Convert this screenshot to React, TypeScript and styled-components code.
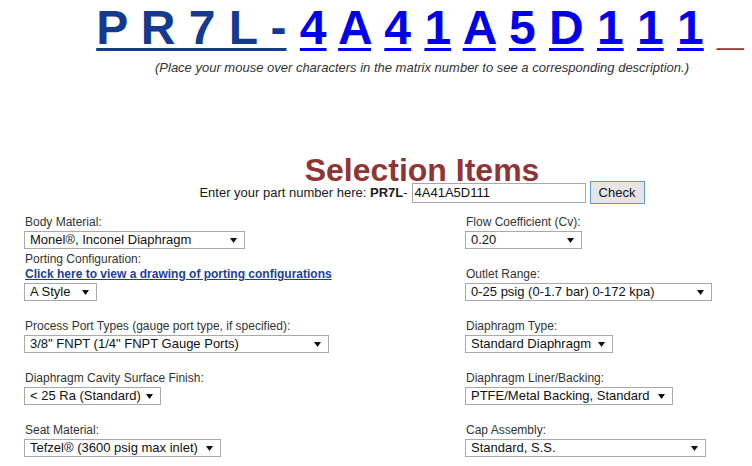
import React from "react";
import styled, { createGlobalStyle } from "styled-components";

const GlobalStyle = createGlobalStyle`
  html, body {
    margin: 0;
    padding: 0;
    background: #ffffff;
    overflow: hidden;
  }
  body {
    font-family: "Liberation Sans", Arial, Helvetica, sans-serif;
    color: #222222;
  }
`;

const Page = styled.div`
  width: 752px;
  height: 466px;
  overflow: hidden;
`;

const Header = styled.header`
  padding-left: 88px;
  text-align: center;
`;

const MatrixTitle = styled.div`
  font-size: 48px;
  font-weight: bold;
  line-height: 56px;
  white-space: nowrap;
`;

const Prefix = styled.span`
  color: #143a90;
  text-decoration: underline;
  text-decoration-thickness: 3px;
  text-underline-offset: 4px;
`;

const MatrixChar = styled.a`
  color: #0000ee;
  text-decoration: underline;
  text-decoration-thickness: 3px;
  text-underline-offset: 4px;
  cursor: pointer;
`;

const Tail = styled.span`
  color: #8f3a34;
`;

const Hint = styled.div`
  margin-top: 4px;
  margin-left: 4px;
  font-size: 13px;
  line-height: 16px;
  font-style: italic;
  color: #333333;
`;

const Heading = styled.h1`
  margin: 83px 0 0 4px;
  font-size: 32px;
  line-height: 22px;
  font-weight: bold;
  color: #8f3535;
`;

const PartRow = styled.div`
  display: flex;
  justify-content: center;
  align-items: center;
  height: 23px;
  margin-left: 4px;
  font-size: 13px;
  color: #1a1a1a;
  white-space: pre;
`;

const Bold = styled.b`
  font-weight: bold;
`;

const PartInput = styled.div`
  box-sizing: border-box;
  width: 174px;
  height: 20px;
  margin-left: 4px;
  padding: 0 2px;
  border: 1px solid #a9a9a9;
  font-size: 13px;
  line-height: 18px;
  text-align: left;
  color: #111111;
`;

const CheckButton = styled.button`
  box-sizing: border-box;
  width: 55px;
  height: 23px;
  margin-left: 4px;
  padding: 0;
  border: 1px solid #5d9ad8;
  background: #e5e5e5;
  font-family: "Liberation Sans", Arial, sans-serif;
  font-size: 13px;
  color: #111111;
`;

const Form = styled.div`
  display: grid;
  grid-template-columns: 441px 1fr;
  grid-auto-rows: 52px;
  margin-top: 10px;
  padding-left: 24px;
`;

const Cell = styled.div`
  display: flex;
  flex-direction: column;
  align-items: flex-start;
`;

const Label = styled.div`
  font-size: 12px;
  line-height: 14px;
  color: #333333;
  margin: 1px 0 2px 1px;
`;

const TopLabel = styled(Label)`
  margin-top: 3px;
  margin-bottom: 0;
`;

const Link = styled.a`
  font-size: 12px;
  line-height: 14px;
  font-weight: bold;
  color: #1d3f93;
  text-decoration: underline;
  margin: 1px 0 2px 1px;
  cursor: pointer;
`;

const SelectBox = styled.div<{ $w: number }>`
  box-sizing: border-box;
  position: relative;
  width: ${(p) => p.$w}px;
  height: 18px;
  padding-left: 5px;
  border: 1px solid #a9a9a9;
  background: #ffffff;
  font-size: 13px;
  line-height: 16px;
  color: #111111;
  white-space: nowrap;
`;

const Arrow = styled.svg`
  position: absolute;
  right: 7px;
  top: 6px;
`;

function Select({ w, value }: { w: number; value: string }) {
  return (
    <SelectBox $w={w}>
      {value}
      <Arrow width="7" height="5" viewBox="0 0 7 5">
        <polygon points="0,0 7,0 3.5,5" fill="#111" />
      </Arrow>
    </SelectBox>
  );
}

const matrix = ["4", "A", "4", "1", "A", "5", "D", "1", "1", "1"];

export default function App() {
  return (
    <Page>
      <GlobalStyle />
      <Header>
        <MatrixTitle>
          <Prefix>P R 7 L -</Prefix>{" "}
          {matrix.map((c, i) => (
            <React.Fragment key={i}>
              <MatrixChar>{c}</MatrixChar>{" "}
            </React.Fragment>
          ))}
          <Tail>_</Tail>
        </MatrixTitle>
        <Hint>
          (Place your mouse over characters in the matrix number to see a corresponding description.)
        </Hint>
        <Heading>Selection Items</Heading>
        <PartRow>
          Enter your part number here: <Bold>PR7L</Bold>-
          <PartInput>4A41A5D111</PartInput>
          <CheckButton>Check</CheckButton>
        </PartRow>
      </Header>
      <Form>
        <Cell>
          <Label>Body Material:</Label>
          <Select w={221} value="Monel®, Inconel Diaphragm" />
          <TopLabel>Porting Configuration:</TopLabel>
        </Cell>
        <Cell>
          <Label>Flow Coefficient (Cv):</Label>
          <Select w={117} value="0.20" />
        </Cell>
        <Cell>
          <Link>Click here to view a drawing of porting configurations</Link>
          <Select w={73} value="A Style" />
        </Cell>
        <Cell>
          <Label>Outlet Range:</Label>
          <Select w={247} value="0-25 psig (0-1.7 bar) 0-172 kpa)" />
        </Cell>
        <Cell>
          <Label>Process Port Types (gauge port type, if specified):</Label>
          <Select w={305} value={'3/8" FNPT (1/4" FNPT Gauge Ports)'} />
        </Cell>
        <Cell>
          <Label>Diaphragm Type:</Label>
          <Select w={148} value="Standard Diaphragm" />
        </Cell>
        <Cell>
          <Label>Diaphragm Cavity Surface Finish:</Label>
          <Select w={137} value="< 25 Ra (Standard)" />
        </Cell>
        <Cell>
          <Label>Diaphragm Liner/Backing:</Label>
          <Select w={208} value="PTFE/Metal Backing, Standard" />
        </Cell>
        <Cell>
          <Label>Seat Material:</Label>
          <Select w={197} value="Tefzel® (3600 psig max inlet)" />
        </Cell>
        <Cell>
          <Label>Cap Assembly:</Label>
          <Select w={241} value="Standard, S.S." />
        </Cell>
      </Form>
    </Page>
  );
}
